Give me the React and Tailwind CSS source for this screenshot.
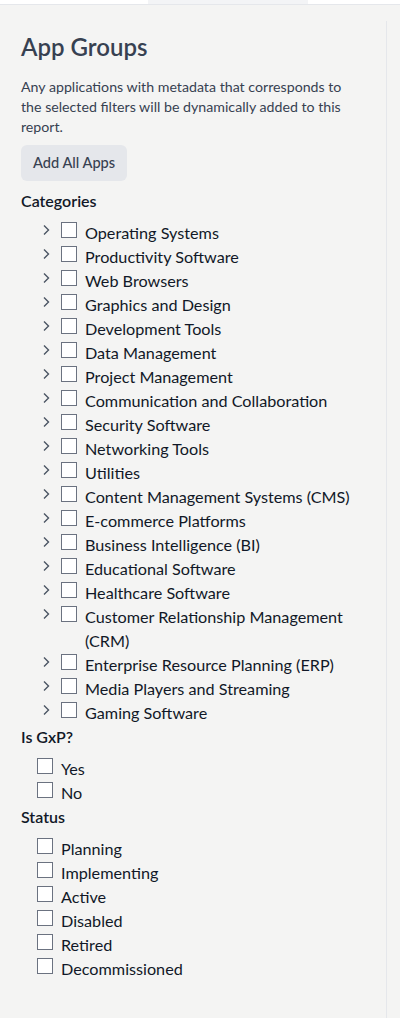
import React from 'react'

const categories = [
  'Operating Systems',
  'Productivity Software',
  'Web Browsers',
  'Graphics and Design',
  'Development Tools',
  'Data Management',
  'Project Management',
  'Communication and Collaboration',
  'Security Software',
  'Networking Tools',
  'Utilities',
  'Content Management Systems (CMS)',
  'E-commerce Platforms',
  'Business Intelligence (BI)',
  'Educational Software',
  'Healthcare Software',
  'Customer Relationship Management (CRM)',
  'Enterprise Resource Planning (ERP)',
  'Media Players and Streaming',
  'Gaming Software',
]

const gxp = ['Yes', 'No']
const statuses = ['Planning', 'Implementing', 'Active', 'Disabled', 'Retired', 'Decommissioned']

function Box({ className = '' }) {
  return <span className={`mt-[1px] block h-4 w-4 shrink-0 border border-[#6b7280] bg-white ${className}`} />
}

function Chevron() {
  return (
    <svg width="10" height="12" viewBox="0 0 10 12" className="mt-[3px] shrink-0 text-[#4b5563]">
      <path d="M3 1.5 L7.5 6 L3 10.5" fill="none" stroke="currentColor" strokeWidth="1.4" />
    </svg>
  )
}

function SectionTitle({ children }) {
  return <h3 className="text-base leading-6 font-semibold text-[#111827]">{children}</h3>
}

export default function App() {
  return (
    <div className="min-h-[1018px] bg-[#f4f4f3] font-['Lato','Liberation_Sans',sans-serif]">
      {/* top tab strip */}
      <div className="flex h-[5px] border-b border-[#e5e7eb] bg-white">
        <div className="ml-[148px] w-[160px] bg-[#f3f4f6]" />
      </div>

      <div className="flex min-h-[1013px]">
        <div className="w-[386px] px-[21px] pt-[26px] pb-8">
          <h2 className="text-2xl leading-8 font-semibold text-[#374151]">App Groups</h2>
          <p className="mt-[14px] max-w-[330px] text-[14.2px] leading-5 text-[#374151]">
            Any applications with metadata that corresponds to the selected filters will be dynamically added to this report.
          </p>
          <button className="mt-2 h-9 rounded-md bg-[#e5e7eb] px-3 text-[14.6px] font-medium text-[#374151]">
            Add All Apps
          </button>

          <div className="mt-2">
            <SectionTitle>Categories</SectionTitle>
            <ul className="mt-2 pl-[20px]">
              {categories.map((c) => (
                <li key={c} className="flex items-start text-[16.2px] leading-6 text-[#111827]">
                  <Chevron />
                  <Box className="ml-[10px]" />
                  <span className="ml-2 max-w-[270px]">{c}</span>
                </li>
              ))}
            </ul>
          </div>

          <div>
            <SectionTitle>Is GxP?</SectionTitle>
            <ul className="mt-2 pl-4">
              {gxp.map((g) => (
                <li key={g} className="flex items-start gap-2 text-[16.2px] leading-6 text-[#111827]">
                  <Box />
                  <span>{g}</span>
                </li>
              ))}
            </ul>
          </div>

          <div>
            <SectionTitle>Status</SectionTitle>
            <ul className="mt-2 pl-4">
              {statuses.map((s) => (
                <li key={s} className="flex items-start gap-2 text-[16.2px] leading-6 text-[#111827]">
                  <Box />
                  <span>{s}</span>
                </li>
              ))}
            </ul>
          </div>
        </div>
        <div className="mt-4 flex-1 border-l border-[#e5e7eb]" />
      </div>
    </div>
  )
}
